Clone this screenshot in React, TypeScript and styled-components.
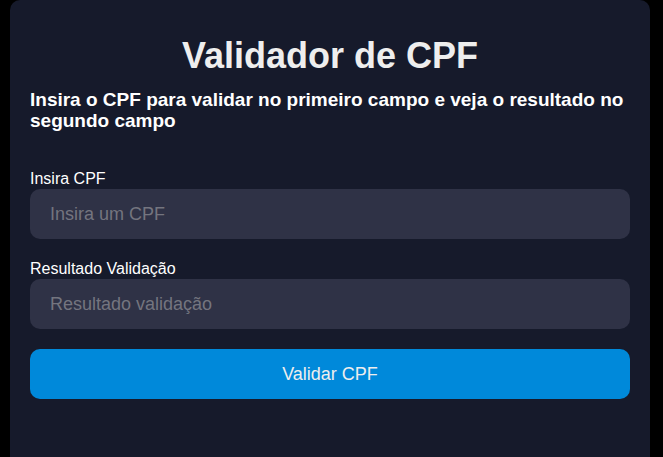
import React from "react";
import styled, { createGlobalStyle } from "styled-components";

const Global = createGlobalStyle`
  html, body { margin: 0; padding: 0; background: #000; overflow: hidden; }
  body { font-family: "Liberation Sans", Arial, sans-serif; }
  * { box-sizing: border-box; }
`;

const Page = styled.div`
  display: flex;
  padding: 0 13px 0 10px;
  height: 457px;
`;

const Card = styled.main`
  flex: 1;
  min-height: 470px;
  background: #161a2b;
  border-radius: 10px;
  padding: 35px 20px 60px;
  display: flex;
  flex-direction: column;
  color: #eeeeee;
`;

const Title = styled.h1`
  margin: 0;
  text-align: center;
  font-size: 36px;
  line-height: 41px;
  font-weight: 700;
  color: #eeeeee;
`;

const Subtitle = styled.h2`
  margin: 13px 0 38px;
  font-size: 19px;
  line-height: 21px;
  font-weight: 700;
  color: #ffffff;
`;

const Field = styled.div`
  display: flex;
  flex-direction: column;
  margin-bottom: 20px;
`;

const Label = styled.label`
  font-size: 16px;
  line-height: 20px;
  color: #ffffff;
`;

const Input = styled.input`
  height: 50px;
  border: none;
  outline: none;
  border-radius: 10px;
  background: #2f3246;
  padding: 0 20px;
  font-family: "Liberation Sans", Arial, sans-serif;
  font-size: 18px;
  color: #eeeeee;
  &::placeholder { color: #74757f; }
`;

const Button = styled.button`
  height: 50px;
  flex-shrink: 0;
  border: none;
  border-radius: 10px;
  background: #0089da;
  color: #eeeeee;
  font-family: "Liberation Sans", Arial, sans-serif;
  font-size: 18px;
  cursor: pointer;
`;

export default function App() {
  return (
    <>
      <Global />
      <Page>
        <Card>
          <Title>Validador de CPF</Title>
          <Subtitle>
            Insira o CPF para validar no primeiro campo e veja o resultado no segundo campo
          </Subtitle>
          <Field>
            <Label htmlFor="cpf">Insira CPF</Label>
            <Input id="cpf" placeholder="Insira um CPF" />
          </Field>
          <Field>
            <Label htmlFor="res">Resultado Validação</Label>
            <Input id="res" placeholder="Resultado validação" readOnly />
          </Field>
          <Button>Validar CPF</Button>
        </Card>
      </Page>
    </>
  );
}
